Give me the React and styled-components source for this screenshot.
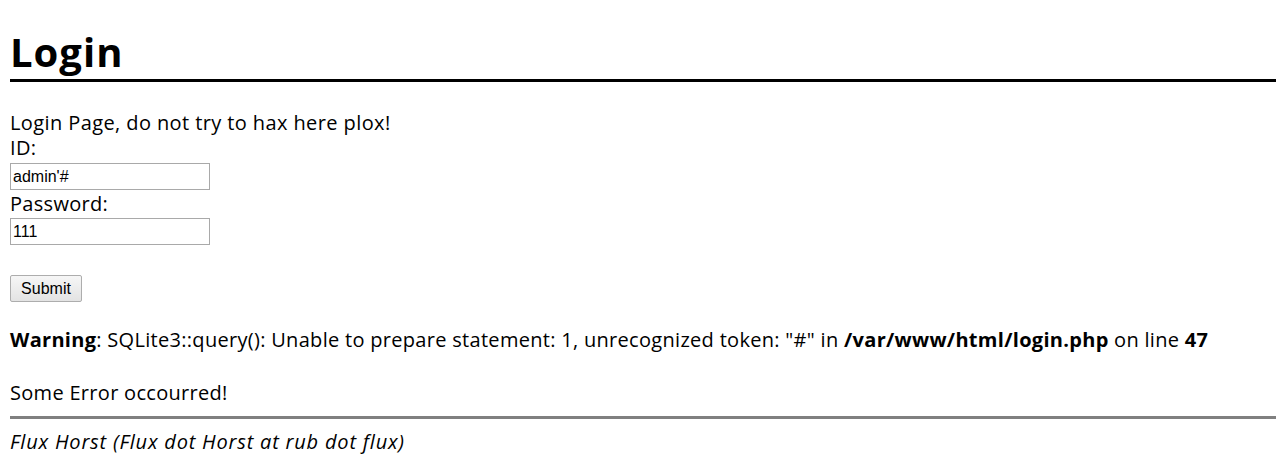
import React from "react";
import styled, { createGlobalStyle } from "styled-components";

const Global = createGlobalStyle`
  html, body { margin: 0; padding: 0; background: #fff; }
  body { font-family: "Open Sans", "Noto Sans", sans-serif; color: #000; }
`;

const Page = styled.div`
  padding: 0 1px 0 10px;
  font-size: 20px;
  line-height: 25px;
  letter-spacing: 0.3px;
`;

const Title = styled.h1`
  margin: 28px 0 0;
  padding-bottom: 3px;
  font-size: 40px;
  line-height: 48px;
  font-weight: 700;
  letter-spacing: 1px;
  border-bottom: 3px solid #000;
`;

const Intro = styled.p`
  margin: 28px 0 0;
  letter-spacing: 0.4px;
`;

const Form = styled.form`
  display: flex;
  flex-direction: column;
  align-items: flex-start;
`;

const Label = styled.label`
  display: block;
`;

const TextInput = styled.input`
  box-sizing: border-box;
  width: 200px;
  height: 27px;
  margin: ${(p) => p.$mt}px 0 ${(p) => p.$mb}px;
  padding: 0 2px;
  border: 1px solid #a9a9a9;
  font-family: "Liberation Sans", Arial, sans-serif;
  font-size: 16px;
  letter-spacing: 0;
  color: #000;
  outline: none;
`;

const SubmitButton = styled.button`
  box-sizing: border-box;
  margin-top: 30px;
  width: 72px;
  height: 27px;
  padding: 0;
  border: 1px solid #adadad;
  border-radius: 2px;
  background: linear-gradient(#f6f6f6, #e3e3e3);
  font-family: "Liberation Sans", Arial, sans-serif;
  font-size: 16px;
  letter-spacing: 0;
  color: #000;
`;

const Message = styled.p`
  margin: ${(p) => p.$top}px 0 0;
`;

const Rule = styled.hr`
  margin: 11px 0 0;
  border: 0;
  height: 3px;
  background: #808080;
`;

const Address = styled.address`
  margin-top: 10px;
  font-style: italic;
  letter-spacing: 0.8px;
`;

export default function App() {
  return (
    <>
      <Global />
      <Page>
        <Title>Login</Title>
        <Intro>Login Page, do not try to hax here plox!</Intro>
        <Form onSubmit={(e) => e.preventDefault()}>
          <Label htmlFor="id">ID:</Label>
          <TextInput id="id" type="text" defaultValue="admin'#" $mt={3} $mb={1} />
          <Label htmlFor="pw">Password:</Label>
          <TextInput id="pw" type="text" defaultValue="111" $mt={2} $mb={0} />
          <SubmitButton type="submit">Submit</SubmitButton>
        </Form>
        <Message $top={25}>
          <b>Warning</b>: SQLite3::query(): Unable to prepare statement: 1,
          unrecognized token: "#" in <b>/var/www/html/login.php</b> on line{" "}
          <b>47</b>
        </Message>
        <Message $top={28}>Some Error occourred!</Message>
        <Rule />
        <Address>Flux Horst (Flux dot Horst at rub dot flux)</Address>
      </Page>
    </>
  );
}
